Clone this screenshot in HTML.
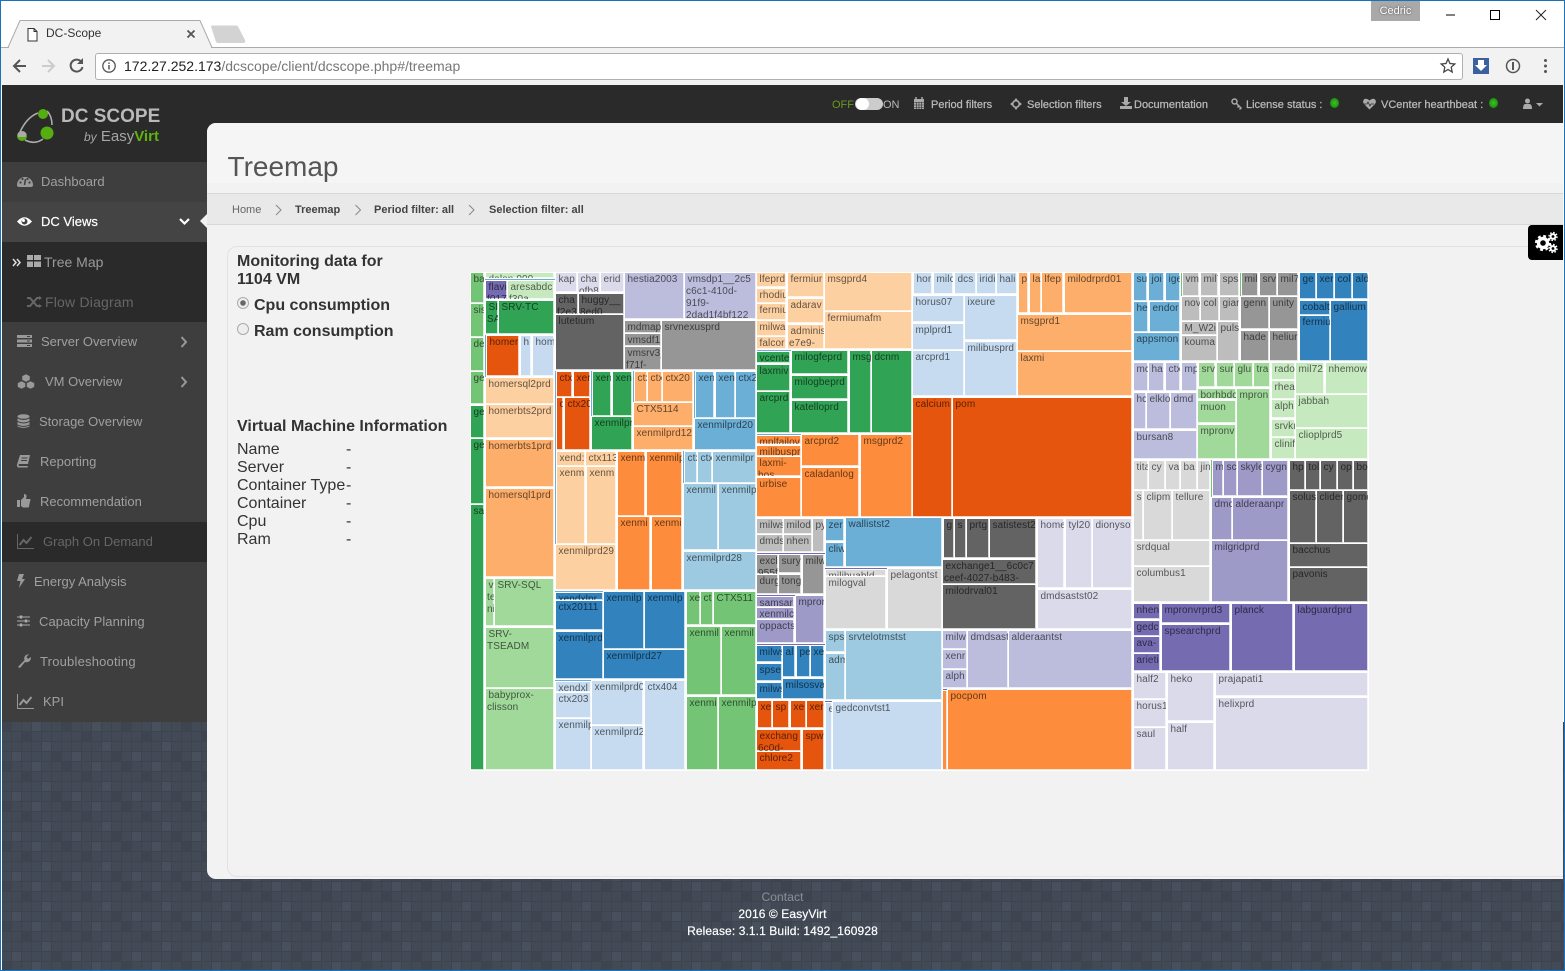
<!DOCTYPE html>
<html><head><meta charset="utf-8"><title>DC-Scope</title>
<style>
html,body{margin:0;padding:0;width:1565px;height:971px;overflow:hidden;background:#fff;font-family:"Liberation Sans",sans-serif}
.abs,.t,p,.n,.nt{position:absolute}
#root{position:absolute;left:0;top:0;width:1565px;height:971px;overflow:hidden}
svg{position:absolute;overflow:visible}
.n{left:2px;width:205px;height:40px;background:#3e3e3e}
.n.dk{background:#2a2a2a}
.nt{white-space:nowrap;font-size:13px;line-height:40px;top:0;color:#a0a0a0}
.t{white-space:nowrap;font-size:11px;color:#b9b9b9;line-height:14px;top:98px;-webkit-text-stroke:.25px #b9b9b9}
p{margin:0;outline:1px solid #fff;overflow:hidden;font-size:10px;line-height:12px;color:rgba(0,0,0,.62);padding:1px 0 0 1px;box-sizing:border-box;text-indent:1.500px;letter-spacing:.1px;box-shadow:inset -1px -1px 0 rgba(255,255,255,.75)}
.a{background:#3182bd}.b{background:#6baed6}.c{background:#9ecae1}.d{background:#c6dbef}.e{background:#e6550d}.f{background:#fd8d3c}.g{background:#fdae6b}.h{background:#fdd0a2}.i{background:#31a354}.j{background:#74c476}.k{background:#a1d99b}.l{background:#c7e9c0}.m{background:#756bb1}.o{background:#9e9ac8}.q{background:#bcbddc}.w{background:#dadaeb}.r{background:#636363}.s{background:#969696}.u{background:#bdbdbd}.v{background:#d9d9d9}
.x{position:absolute;font-size:16px;color:#333;white-space:nowrap;line-height:18px}
.bd{font-weight:bold}
.bc{position:absolute;top:204px;font-size:11px;line-height:13px;font-weight:bold;color:#444;white-space:nowrap}
</style></head>
<body><div id="root">

<!-- browser chrome -->
<div class="abs" style="left:0;top:0;width:1565px;height:971px;background:#fff"></div>
<div class="abs" style="left:0;top:47px;width:1565px;height:1px;background:#aaa"></div>
<div class="abs" style="left:0;top:48px;width:1565px;height:37px;background:#f2f2f2"></div>
<svg style="left:0;top:0" width="260" height="50"><path d="M1 47.5H8L20 20.500H200L212 47.500" fill="#f2f2f2" stroke="#aaa" stroke-width="1"/><path d="M9 48H211" stroke="#f2f2f2" stroke-width="2"/><path d="M211 26.500q0-1 1-1H236q1 0 2 1L245 40q1 3-2 3H218q-1 0-2-1Z" fill="#d3d3d3"/>
<path d="M28 28.500h6l3 3v9.500h-9zM34 28.500v3h3" fill="#fff" stroke="#333" stroke-width="1"/>
<path d="M187.500 30.500l7 7m0-7l-7 7" stroke="#555" stroke-width="1.800"/></svg>
<div class="abs" style="left:46px;top:26px;font-size:12px;line-height:15px;color:#333">DC-Scope</div>
<div class="abs" style="left:1371px;top:1px;width:49px;height:20px;background:#a9a9a9;color:#fff;font-size:11px;line-height:21px;text-align:center;text-shadow:0 0 2px #444">Cedric</div>
<svg style="left:1440px;top:0" width="120" height="30"><path d="M6 15H15" stroke="#000" stroke-width="1"/><rect x="50.500" y="10.500" width="9" height="9" fill="none" stroke="#000"/><path d="M96 10l10 10m0-10L96 20" stroke="#222" stroke-width="1"/></svg>
<svg style="left:0;top:48px" width="100" height="36"><path d="M26 18H15M20 12l-6 6 6 6" fill="none" stroke="#555" stroke-width="2"/><path d="M54 18H42M48 12l6 6-6 6" fill="none" stroke="#ccc" stroke-width="2"/><path d="M81.500 14a6 6 0 1 0 1 5" fill="none" stroke="#555" stroke-width="2"/><path d="M83 10v6h-6z" fill="#555"/></svg>
<div class="abs" style="left:95px;top:53px;width:1366px;height:25px;background:#fff;border:1px solid #b0b0b0;border-radius:3px"></div>
<svg style="left:101px;top:58px" width="18" height="18"><circle cx="8" cy="8" r="6.200" fill="none" stroke="#555" stroke-width="1.300"/><path d="M8 7v4.500M8 4.500v1.400" stroke="#555" stroke-width="1.500"/></svg>
<div class="abs" style="left:124px;top:58px;font-size:14px;line-height:16px;color:#777;white-space:nowrap"><span style="color:#222">172.27.252.173</span>/dcscope/client/dcscope.php#/treemap</div>
<svg style="left:1440px;top:56px" width="120" height="22"><path d="M8 3l2 4.500 4.800.500-3.600 3.200 1 4.800L8 13.500 3.800 16l1-4.800L1.200 8 6 7.500Z" fill="none" stroke="#444" stroke-width="1.300"/><rect x="33" y="2" width="16" height="16" fill="#3b5f9f"/><path d="M38 4h6v5h3l-6 6-6-6h3z" fill="#fff"/><circle cx="73" cy="10" r="6.500" fill="none" stroke="#555" stroke-width="1.500"/><path d="M73 6v8" stroke="#555" stroke-width="2"/><circle cx="105.500" cy="4.500" r="1.500" fill="#555"/><circle cx="105.500" cy="10" r="1.500" fill="#555"/><circle cx="105.500" cy="15.500" r="1.500" fill="#555"/></svg>

<!-- app dark header -->
<div class="abs" style="left:2px;top:85px;width:1561px;height:80px;background:#2a2a2a"></div>
<svg style="left:14px;top:105px" width="44" height="42"><path d="M6 27Q13 12 24 8M33 6Q38 11 38 20M11 35Q21 40 29 34" fill="none" stroke="#aaa" stroke-width="1.600"/><circle cx="29" cy="9" r="5" fill="#55ad10"/><circle cx="33" cy="28" r="6.500" fill="#55ad10"/><circle cx="8" cy="31" r="5" fill="#55ad10"/><path d="M3.500 29a5 5 0 0 1 9 0l-1 3H4z" fill="#aaa"/></svg>
<div class="abs" style="left:61px;top:104px;font-size:19px;font-weight:bold;line-height:26px;color:#b9b9b9;white-space:nowrap">DC SCOPE</div>
<div class="abs" style="left:84px;top:128px;font-size:15px;line-height:18px;color:#a6a6a6;white-space:nowrap"><i style="font-size:12px">by</i> Easy<b style="color:#5fb30d">Virt</b></div>

<!-- topbar -->
<div class="t" style="left:832px;color:#6a9a1f;-webkit-text-stroke:0">OFF</div>
<div class="abs" style="left:855px;top:98px;width:28px;height:12px;background:#ccc;border-radius:6px"></div>
<div class="abs" style="left:856px;top:98px;width:13px;height:12px;background:#fff;border-radius:6px"></div>
<div class="t" style="left:883px;-webkit-text-stroke:0">ON</div>
<svg style="left:913px;top:97px" width="12" height="13"><path d="M1 2h10v10H1z" fill="#aaa"/><path d="M3 0v3M9 0v3" stroke="#aaa" stroke-width="1.500"/><path d="M1 5.500h10M1 8h10M1 10.500h10M3.500 5v7M6 5v7M8.500 5v7" stroke="#2a2a2a" stroke-width=".6"/></svg>
<div class="t" style="left:931px">Period filters</div>
<svg style="left:1010px;top:98px" width="12" height="12"><circle cx="6" cy="6" r="3.300" fill="none" stroke="#aaa" stroke-width="1.700"/><path d="M6 0l1.500 2h-3zM6 12l1.500-2h-3zM0 6l2-1.500v3zM12 6l-2-1.500v3z" fill="#aaa"/></svg>
<div class="t" style="left:1027px">Selection filters</div>
<svg style="left:1120px;top:97px" width="12" height="12"><path d="M4 0h4v5h3L6 9 1 5h3zM0 9h12v3H0z" fill="#aaa"/></svg>
<div class="t" style="left:1134px">Documentation</div>
<svg style="left:1231px;top:98px" width="12" height="12"><circle cx="3.500" cy="3.500" r="2.500" fill="none" stroke="#aaa" stroke-width="1.500"/><path d="M5.500 5.500l5 5M8 8l-1.500 1.500M10 10l-1.500 1.500" stroke="#aaa" stroke-width="1.500"/></svg>
<div class="t" style="left:1246px">License status :</div>
<div class="abs" style="left:1330px;top:98px;width:9px;height:10px;border-radius:50%;background:radial-gradient(#3fc31f,#0d7c0d)"></div>
<svg style="left:1363px;top:98px" width="13" height="12"><path d="M6.500 11.500L1 6Q-1 3 1.500 1 4 0 6.500 2.500 9 0 11.500 1 14 3 12 6Z" fill="#aaa"/><path d="M1 6h3l1-2 2 4 1-2h3" fill="none" stroke="#2a2a2a" stroke-width=".8"/></svg>
<div class="t" style="left:1381px">VCenter hearthbeat :</div>
<div class="abs" style="left:1489px;top:98px;width:9px;height:10px;border-radius:50%;background:radial-gradient(#3fc31f,#0d7c0d)"></div>
<svg style="left:1522px;top:98px" width="24" height="12"><circle cx="5.500" cy="3" r="2.500" fill="#aaa"/><path d="M1 11q0-5 2.500-5h4Q10 6 10 11Z" fill="#aaa"/><path d="M14 5h7l-3.500 3.500z" fill="#aaa"/></svg>

<!-- sidebar -->
<div class="n" style="top:162px"><svg style="left:15px;top:12px" width="16" height="14"><path d="M0 11a8 8 0 0 1 16 0q0 2-2 2H2q-2 0-2-2z" fill="#999"/><circle cx="3.500" cy="8.500" r="1.100" fill="#3e3e3e"/><circle cx="5.500" cy="5" r="1.100" fill="#3e3e3e"/><circle cx="10.500" cy="5" r="1.100" fill="#3e3e3e"/><circle cx="12.500" cy="8.500" r="1.100" fill="#3e3e3e"/><path d="M7.500 11l1-6" stroke="#3e3e3e" stroke-width="1.500"/></svg><div class="nt" style="left:39px">Dashboard</div></div>
<div class="n" style="top:202px;background:#444"><svg style="left:15px;top:14px" width="15" height="11"><path d="M0 5.500Q7.500-3 15 5.500 7.500 14 0 5.500Z" fill="#fff"/><circle cx="7.500" cy="5.500" r="3" fill="#444"/><circle cx="6.500" cy="4.500" r="1.500" fill="#fff"/></svg><div class="nt" style="left:39px;color:#fff;-webkit-text-stroke:.2px #fff">DC Views</div><svg style="left:177px;top:16px" width="11" height="8"><path d="M1 1l4.500 4.500L10 1" fill="none" stroke="#fff" stroke-width="2.200"/></svg></div>
<div class="n dk" style="top:242px"><svg style="left:10px;top:16px" width="10" height="9"><path d="M1 1l3 3.500L1 8M5 1l3 3.500L5 8" fill="none" stroke="#ddd" stroke-width="1.500"/></svg><svg style="left:25px;top:13px" width="14" height="12"><path d="M0 0h6v5H0zM7 0h7v5H7zM0 6.500h6V12H0zM7 6.500h7V12H7z" fill="#aaa"/></svg><div class="nt" style="left:42px;font-size:14px;color:#9a9a9a">Tree Map</div></div>
<div class="n dk" style="top:282px"><svg style="left:25px;top:14px" width="15" height="12"><path d="M0 2h3l7 8h3M0 10h3l7-8h3" fill="none" stroke="#666" stroke-width="2"/><path d="M12 0l3 2-3 2zM12 8l3 2-3 2z" fill="#666"/></svg><div class="nt" style="left:43px;font-size:14px;color:#666;letter-spacing:.2px">Flow Diagram</div></div>
<div class="n" style="top:322px"><svg style="left:15px;top:13px" width="15" height="12"><path d="M0 0h15v3H0zM0 4.500h15v3H0zM0 9h15v3H0z" fill="#999"/><path d="M10 1.500h3M10 6h3M10 10.500h3" stroke="#3e3e3e"/></svg><div class="nt" style="left:39px">Server Overview</div><svg style="left:178px;top:14px" width="8" height="12"><path d="M1.500 1l4.500 5-4.500 5" fill="none" stroke="#999" stroke-width="2"/></svg></div>
<div class="n" style="top:362px"><svg style="left:15px;top:12px" width="18" height="15"><path d="M9 0l4 2v4l-4 2-4-2V2zM4.500 7l4 2v4l-4 2-4-2V9zM13.500 7l4 2v4l-4 2-4-2V9z" fill="#999" stroke="#3e3e3e" stroke-width=".5"/></svg><div class="nt" style="left:43px">VM Overview</div><svg style="left:178px;top:14px" width="8" height="12"><path d="M1.500 1l4.500 5-4.500 5" fill="none" stroke="#999" stroke-width="2"/></svg></div>
<div class="n" style="top:402px"><svg style="left:15px;top:12px" width="13" height="15"><ellipse cx="6.500" cy="2.500" rx="6" ry="2.300" fill="#999"/><path d="M.5 4.500q6 3 12 0v2.500q-6 3-12 0zM.5 8q6 3 12 0v2.500q-6 3-12 0zM.5 11.500q6 3 12 0v1q-6 3-12 0z" fill="#999"/></svg><div class="nt" style="left:37px">Storage Overview</div></div>
<div class="n" style="top:442px"><svg style="left:15px;top:13px" width="13" height="13"><path d="M3 0h10l-2 9H2q-1 1 0 2h9l-.5 1.500H1Q-1 11 .5 8z" fill="#999"/><path d="M4.500 3h6M4 5.500h6" stroke="#3e3e3e"/></svg><div class="nt" style="left:38px">Reporting</div></div>
<div class="n" style="top:482px"><svg style="left:15px;top:12px" width="14" height="14"><path d="M0 6h3v7H0zM4 6l3-3V0q3 0 2.500 3L9 5h4q1 1 0 2.500l-1 5q0 1-1 1H6L4 12z" fill="#999"/></svg><div class="nt" style="left:38px">Recommendation</div></div>
<div class="n dk" style="top:522px"><svg style="left:15px;top:12px" width="17" height="15"><path d="M.5 0v14.500H17" fill="none" stroke="#666"/><path d="M2.500 11l4-5 3 3 5-6" fill="none" stroke="#666" stroke-width="2"/></svg><div class="nt" style="left:41px;color:#666">Graph On Demand</div></div>
<div class="n" style="top:562px"><svg style="left:15px;top:12px" width="8" height="14"><path d="M2 0h5L5 5h3L2 14l1.500-7H0z" fill="#999"/></svg><div class="nt" style="left:32px">Energy Analysis</div></div>
<div class="n" style="top:602px"><svg style="left:15px;top:13px" width="13" height="12"><path d="M0 2h13M0 6h13M0 10h13" stroke="#aaa"/><path d="M4 .5v3M9 4.500v3M4 8.500v3" stroke="#aaa" stroke-width="2.400"/></svg><div class="nt" style="left:37px;letter-spacing:.05px">Capacity Planning</div></div>
<div class="n" style="top:642px"><svg style="left:15px;top:12px" width="14" height="14"><path d="M1 13l6.500-7Q6.500 3 9 1l3-1-2.500 3 1.500 2 3-2q0 4-3 5-1.500.5-3 0L3 14z" fill="#999"/></svg><div class="nt" style="left:38px;letter-spacing:.2px">Troubleshooting</div></div>
<div class="n" style="top:682px"><svg style="left:15px;top:12px" width="17" height="15"><path d="M.5 0v14.500H17" fill="none" stroke="#999"/><path d="M2.500 11l4-5 3 3 5-6" fill="none" stroke="#999" stroke-width="2"/></svg><div class="nt" style="left:41px">KPI</div></div>

<!-- textured bg -->
<svg style="left:2px;top:722px" width="1563" height="249"><defs><pattern id="tx" x="0" y="0" width="60" height="40" patternUnits="userSpaceOnUse"><rect width="60" height="40" fill="#424a56"/><rect x="0" y="0" width="9" height="9" fill="#3e4550"/><rect x="20" y="10" width="9" height="9" fill="#3e4550"/><rect x="40" y="20" width="9" height="9" fill="#47505c"/><rect x="10" y="30" width="9" height="9" fill="#47505c"/><rect x="30" y="0" width="9" height="9" fill="#47505c"/><rect x="50" y="30" width="9" height="9" fill="#3e4550"/><path d="M9.500 0v40M19.500 0v40M29.500 0v40M39.500 0v40M49.500 0v40M59.500 0v40M0 9.500h60M0 19.500h60M0 29.500h60M0 39.500h60" stroke="#3d444f"/></pattern></defs><rect width="1563" height="249" fill="url(#tx)"/></svg>

<!-- main panel -->
<div class="abs" style="left:207px;top:123px;width:1356px;height:756px;background:#f2f2f2;border-radius:9px 0 0 9px"></div>
<div class="abs" style="left:207px;top:123px;width:1356px;height:60px;background:#f5f5f5;border-radius:9px 0 0 0"></div>
<div class="abs" style="left:227.500px;top:150px;font-size:28px;line-height:34px;color:#555">Treemap</div>
<div class="abs" style="left:207px;top:193px;width:1356px;height:32px;background:#e9e9e9;border-top:1px solid #d8d8d8;border-bottom:1px solid #d8d8d8;box-sizing:border-box"></div>
<div class="bc" style="left:232px;font-weight:normal;color:#666">Home</div>
<div class="bc" style="left:295px">Treemap</div>
<div class="bc" style="left:374px">Period filter: all</div>
<div class="bc" style="left:489px">Selection filter: all</div>
<svg style="left:270px;top:203px" width="210" height="14"><path d="M6 2l5 5-5 5M85.500 2l5 5-5 5M199 2l5 5-5 5" fill="none" stroke="#888" stroke-width="1"/></svg>
<div class="abs" style="left:227px;top:246px;width:1336px;height:631px;border:1px solid #e2e2e2;border-right:0;border-radius:10px 0 0 10px;box-sizing:border-box"></div>
<div class="abs" style="left:1528px;top:225px;width:35px;height:35px;background:#000;border-radius:4px 0 0 4px"></div>
<svg style="left:1533px;top:230px" width="26" height="24"><g fill="none" stroke="#fff"><circle cx="10" cy="13" r="4.500" stroke-width="3.400"/><circle cx="10" cy="13" r="7" stroke-width="2.200" stroke-dasharray="2.900 2.600"/><circle cx="20" cy="6.500" r="2.400" stroke-width="2"/><circle cx="20" cy="6.500" r="4" stroke-width="1.400" stroke-dasharray="1.600 1.540"/><circle cx="20" cy="18.500" r="2.400" stroke-width="2"/><circle cx="20" cy="18.500" r="4" stroke-width="1.400" stroke-dasharray="1.600 1.540"/></g></svg>

<!-- left info -->
<div class="x bd" style="left:237px;top:253px">Monitoring data for</div>
<div class="x bd" style="left:237px;top:271px">1104 VM</div>
<svg style="left:236px;top:296px" width="14" height="42"><circle cx="7" cy="7" r="5.500" fill="#eee" stroke="#aaa"/><circle cx="7" cy="7" r="2.800" fill="#666"/><circle cx="7" cy="33" r="5.500" fill="#eee" stroke="#aaa"/></svg>
<div class="x bd" style="left:254px;top:297px">Cpu consumption</div>
<div class="x bd" style="left:254px;top:323px">Ram consumption</div>
<div class="x bd" style="left:237px;top:418px">Virtual Machine Information</div>
<div class="x" style="left:237px;top:441px">Name</div><div class="x" style="left:346px;top:441px">-</div>
<div class="x" style="left:237px;top:459px">Server</div><div class="x" style="left:346px;top:459px">-</div>
<div class="x" style="left:237px;top:477px">Container Type</div><div class="x" style="left:346px;top:477px">-</div>
<div class="x" style="left:237px;top:495px">Container</div><div class="x" style="left:346px;top:495px">-</div>
<div class="x" style="left:237px;top:513px">Cpu</div><div class="x" style="left:346px;top:513px">-</div>
<div class="x" style="left:237px;top:531px">Ram</div><div class="x" style="left:346px;top:531px">-</div>

<!-- footer -->
<div class="abs" style="left:0;top:889px;width:1565px;text-align:center;font-size:12px;line-height:17px;color:#fff;letter-spacing:.1px;-webkit-text-stroke:.2px #fff"><div style="color:#8b9098;-webkit-text-stroke:0">Contact</div><div>2016 © EasyVirt</div><div>Release: 3.1.1 Build: 1492_160928</div></div>

<!-- treemap backgrounds -->
<div class="abs" style="left:484px;top:273px;width:649px;height:497px;background:#6baed6"></div>
<div class="abs" style="left:756px;top:517px;width:377px;height:253px;background:#756bb1"></div>
<div class="abs" style="left:1133px;top:273px;width:235px;height:497px;background:#74c476"></div>

<p class="j" style="left:471px;top:273px;width:13px;height:30px">ba</p>
<p class="j" style="left:471px;top:304px;width:13px;height:33px">sis</p>
<p class="j" style="left:471px;top:338px;width:13px;height:33px">de</p>
<p class="j" style="left:471px;top:372px;width:13px;height:32px">ge</p>
<p class="i" style="left:471px;top:406px;width:13px;height:32px">ge</p>
<p class="i" style="left:471px;top:439px;width:13px;height:65px">ge</p>
<p class="i" style="left:471px;top:505px;width:13px;height:265px">sa</p>

<p class="l" style="left:486px;top:273px;width:68px;height:5px">dalon 000</p>
<p class="m" style="left:486px;top:281px;width:21px;height:18px">flavi f017</p>
<p class="l" style="left:508px;top:281px;width:46px;height:18px">aresabdc f30a</p>
<p class="i" style="left:486px;top:301px;width:12px;height:33px">SI SA</p>
<p class="i" style="left:499px;top:301px;width:55px;height:33px">SRV-TC</p>
<p class="e" style="left:487px;top:336px;width:32px;height:40px">homer</p>
<p class="d" style="left:521px;top:336px;width:10px;height:40px">h</p>
<p class="d" style="left:533px;top:336px;width:21px;height:40px">hom</p>
<p class="h" style="left:486px;top:378px;width:68px;height:26px">homersql2prd</p>
<p class="h" style="left:486px;top:405px;width:68px;height:33px">homerbts2prd</p>
<p class="g" style="left:486px;top:440px;width:68px;height:47px">homerbts1prd</p>
<p class="g" style="left:486px;top:489px;width:68px;height:88px">homersql1prd</p>
<p class="k" style="left:486px;top:579px;width:8px;height:47px">v te ni</p>
<p class="k" style="left:495px;top:579px;width:59px;height:47px">SRV-SQL</p>
<p class="k" style="left:486px;top:628px;width:68px;height:60px">SRV-TSEADM</p>
<p class="k" style="left:486px;top:689px;width:68px;height:81px">babyprox-clisson</p>

<p class="w" style="left:556px;top:273px;width:21px;height:19px">kap</p>
<p class="w" style="left:578px;top:273px;width:22px;height:19px">cha ofb8</p>
<p class="w" style="left:601px;top:273px;width:23px;height:19px">erid</p>
<p class="r" style="left:556px;top:294px;width:22px;height:20px">cha f2e3</p>
<p class="r" style="left:579px;top:294px;width:45px;height:20px">huggy__ 8ed0</p>
<p class="r" style="left:556px;top:315px;width:68px;height:55px">lutetium</p>
<p class="q" style="left:625px;top:273px;width:59px;height:46px">hestia2003</p>
<p class="q" style="left:685px;top:273px;width:71px;height:46px">vmsdp1__2c5 c6c1-410d-91f9-2dad1f4bf122</p>
<p class="s" style="left:625px;top:321px;width:36px;height:12px">mdmap</p>
<p class="s" style="left:625px;top:334px;width:36px;height:12px">vmsdf1</p>
<p class="s" style="left:625px;top:347px;width:36px;height:23px">vmsrv3_ f71f-</p>
<p class="s" style="left:662px;top:321px;width:94px;height:49px">srvnexusprd</p>

<p class="e" style="left:557px;top:372px;width:15px;height:25px">ctx</p>
<p class="e" style="left:574px;top:372px;width:16px;height:25px">xer</p>
<p class="e" style="left:557px;top:398px;width:6px;height:52px">c</p>
<p class="e" style="left:565px;top:398px;width:25px;height:52px">ctx20</p>
<p class="i" style="left:593px;top:372px;width:18px;height:44px">xen</p>
<p class="i" style="left:613px;top:372px;width:19px;height:44px">xen</p>
<p class="i" style="left:592px;top:417px;width:40px;height:33px">xenmilpr</p>
<p class="g" style="left:635px;top:372px;width:12px;height:30px">ctx</p>
<p class="g" style="left:648px;top:372px;width:14px;height:30px">ctx</p>
<p class="g" style="left:663px;top:372px;width:30px;height:30px">ctx20</p>
<p class="g" style="left:634px;top:403px;width:59px;height:23px">CTX5114</p>
<p class="g" style="left:634px;top:427px;width:59px;height:23px">xenmilprd12</p>
<p class="b" style="left:696px;top:372px;width:18px;height:46px">xen</p>
<p class="b" style="left:716px;top:372px;width:19px;height:46px">xen</p>
<p class="b" style="left:736px;top:372px;width:20px;height:46px">ctx2</p>
<p class="b" style="left:695px;top:419px;width:61px;height:31px">xenmilprd20</p>

<p class="h" style="left:557px;top:452px;width:28px;height:14px">xend:</p>
<p class="h" style="left:586px;top:452px;width:30px;height:14px">ctx113</p>
<p class="h" style="left:557px;top:467px;width:28px;height:77px">xenm</p>
<p class="h" style="left:587px;top:467px;width:29px;height:77px">xenm</p>
<p class="h" style="left:556px;top:545px;width:60px;height:45px">xenmilprd29</p>
<p class="f" style="left:618px;top:452px;width:27px;height:64px">xenm</p>
<p class="f" style="left:647px;top:452px;width:35px;height:64px">xenmilp</p>
<p class="f" style="left:618px;top:517px;width:32px;height:73px">xenmi</p>
<p class="f" style="left:652px;top:517px;width:30px;height:73px">xenmi</p>
<p class="c" style="left:685px;top:452px;width:12px;height:31px">ctx</p>
<p class="c" style="left:698px;top:452px;width:14px;height:31px">ctx</p>
<p class="c" style="left:713px;top:452px;width:43px;height:31px">xenmilpr</p>
<p class="c" style="left:684px;top:484px;width:34px;height:66px">xenmil</p>
<p class="c" style="left:719px;top:484px;width:37px;height:66px">xenmilp</p>
<p class="c" style="left:684px;top:552px;width:72px;height:38px">xenmilprd28</p>

<p class="a" style="left:556px;top:593px;width:47px;height:7px">xendxlpr</p>
<p class="a" style="left:556px;top:601px;width:47px;height:29px">ctx20111</p>
<p class="a" style="left:556px;top:632px;width:47px;height:47px">xenmilprd</p>
<p class="a" style="left:604px;top:592px;width:40px;height:57px">xenmilp</p>
<p class="a" style="left:645px;top:592px;width:40px;height:57px">xenmilp</p>
<p class="a" style="left:604px;top:650px;width:81px;height:29px">xenmilprd27</p>
<p class="d" style="left:556px;top:682px;width:35px;height:10px">xendxl</p>
<p class="d" style="left:556px;top:693px;width:35px;height:25px">ctx203</p>
<p class="d" style="left:556px;top:719px;width:35px;height:51px">xenmilp</p>
<p class="d" style="left:592px;top:681px;width:51px;height:44px">xenmilprd0</p>
<p class="d" style="left:592px;top:726px;width:51px;height:44px">xenmilprd2</p>
<p class="d" style="left:645px;top:681px;width:40px;height:89px">ctx404</p>
<p class="j" style="left:687px;top:592px;width:13px;height:33px">xe</p>
<p class="j" style="left:701px;top:592px;width:12px;height:33px">ct</p>
<p class="j" style="left:714px;top:592px;width:42px;height:33px">CTX511</p>
<p class="j" style="left:687px;top:627px;width:34px;height:68px">xenmil</p>
<p class="j" style="left:722px;top:627px;width:34px;height:68px">xenmil</p>
<p class="j" style="left:687px;top:697px;width:31px;height:73px">xenmi</p>
<p class="j" style="left:719px;top:697px;width:37px;height:73px">xenmilp</p>

<p class="h" style="left:757px;top:273px;width:29px;height:14px">lfeprd</p>
<p class="h" style="left:757px;top:289px;width:29px;height:14px">rhodiu</p>
<p class="h" style="left:757px;top:304px;width:29px;height:16px">fermiu</p>
<p class="h" style="left:757px;top:321px;width:29px;height:15px">milwa</p>
<p class="h" style="left:757px;top:337px;width:29px;height:12px">falcor</p>
<p class="h" style="left:788px;top:273px;width:36px;height:24px">fermiur</p>
<p class="h" style="left:788px;top:299px;width:36px;height:24px">adarav</p>
<p class="h" style="left:788px;top:325px;width:36px;height:24px">adminis e7e9-</p>
<p class="h" style="left:825px;top:273px;width:87px;height:38px">msgprd4</p>
<p class="h" style="left:825px;top:312px;width:87px;height:37px">fermiumafm</p>
<p class="i" style="left:757px;top:352px;width:33px;height:11px">vcente</p>
<p class="i" style="left:757px;top:365px;width:33px;height:26px">laxmiv</p>
<p class="i" style="left:757px;top:392px;width:33px;height:41px">arcprd</p>
<p class="i" style="left:792px;top:351px;width:56px;height:23px">milogfeprd</p>
<p class="i" style="left:792px;top:376px;width:56px;height:23px">milogbeprd</p>
<p class="i" style="left:792px;top:401px;width:56px;height:32px">katelloprd</p>
<p class="i" style="left:850px;top:351px;width:21px;height:82px">msg</p>
<p class="i" style="left:872px;top:351px;width:40px;height:82px">dcnm</p>
<p class="f" style="left:757px;top:436px;width:44px;height:8px">mplfailov</p>
<p class="f" style="left:757px;top:446px;width:44px;height:10px">milibuspr</p>
<p class="f" style="left:757px;top:457px;width:44px;height:19px">laxmi-hos</p>
<p class="f" style="left:757px;top:478px;width:44px;height:39px">urbise</p>
<p class="f" style="left:802px;top:435px;width:57px;height:31px">arcprd2</p>
<p class="f" style="left:802px;top:468px;width:57px;height:49px">caladanlog</p>
<p class="f" style="left:861px;top:435px;width:51px;height:82px">msgprd2</p>

<p class="d" style="left:914px;top:273px;width:18px;height:21px">hor</p>
<p class="d" style="left:934px;top:273px;width:19px;height:21px">milc</p>
<p class="d" style="left:955px;top:273px;width:21px;height:21px">dcs</p>
<p class="d" style="left:977px;top:273px;width:19px;height:21px">iridi</p>
<p class="d" style="left:997px;top:273px;width:20px;height:21px">hali</p>
<p class="d" style="left:913px;top:296px;width:51px;height:26px">horus07</p>
<p class="d" style="left:913px;top:324px;width:51px;height:26px">mplprd1</p>
<p class="d" style="left:913px;top:351px;width:51px;height:45px">arcprd1</p>
<p class="d" style="left:965px;top:296px;width:52px;height:44px">ixeure</p>
<p class="d" style="left:965px;top:342px;width:52px;height:54px">milibusprd</p>
<p class="g" style="left:1019px;top:273px;width:9px;height:40px">p</p>
<p class="g" style="left:1030px;top:273px;width:11px;height:40px">la</p>
<p class="g" style="left:1042px;top:273px;width:21px;height:40px">lfep</p>
<p class="g" style="left:1065px;top:273px;width:67px;height:40px">milodrprd01</p>
<p class="g" style="left:1018px;top:315px;width:114px;height:36px">msgprd1</p>
<p class="g" style="left:1018px;top:352px;width:114px;height:44px">laxmi</p>
<p class="e" style="left:913px;top:398px;width:39px;height:119px">calcium</p>
<p class="e" style="left:953px;top:398px;width:179px;height:119px">pom</p>

<p class="u" style="left:757px;top:519px;width:26px;height:15px">milws</p>
<p class="u" style="left:784px;top:519px;width:28px;height:15px">milod</p>
<p class="u" style="left:757px;top:535px;width:26px;height:17px">dmds</p>
<p class="u" style="left:784px;top:535px;width:28px;height:17px">nhen</p>
<p class="u" style="left:813px;top:519px;width:11px;height:33px">py</p>
<p class="s" style="left:757px;top:555px;width:21px;height:19px">excl 955f</p>
<p class="s" style="left:757px;top:575px;width:21px;height:19px">durg</p>
<p class="s" style="left:779px;top:555px;width:22px;height:18px">sury</p>
<p class="s" style="left:779px;top:575px;width:22px;height:19px">tong</p>
<p class="s" style="left:803px;top:555px;width:21px;height:39px">milw</p>
<p class="o" style="left:757px;top:597px;width:37px;height:10px">samsar</p>
<p class="o" style="left:757px;top:608px;width:37px;height:11px">xenmilc</p>
<p class="o" style="left:757px;top:620px;width:37px;height:23px">oppacts</p>
<p class="o" style="left:796px;top:596px;width:28px;height:47px">mpron</p>
<p class="a" style="left:757px;top:646px;width:25px;height:16px">milws</p>
<p class="a" style="left:757px;top:664px;width:25px;height:17px">spse</p>
<p class="a" style="left:757px;top:683px;width:25px;height:16px">milws</p>
<p class="a" style="left:783px;top:646px;width:12px;height:31px">al</p>
<p class="a" style="left:797px;top:646px;width:13px;height:31px">pe</p>
<p class="a" style="left:811px;top:646px;width:13px;height:31px">xe</p>
<p class="a" style="left:783px;top:679px;width:41px;height:20px">milsosva</p>
<p class="e" style="left:758px;top:701px;width:14px;height:27px">xe</p>
<p class="e" style="left:773px;top:701px;width:16px;height:27px">sp</p>
<p class="e" style="left:791px;top:701px;width:15px;height:27px">xe</p>
<p class="e" style="left:807px;top:701px;width:17px;height:27px">xer</p>
<p class="e" style="left:757px;top:730px;width:44px;height:21px">exchang 6c0d-</p>
<p class="e" style="left:757px;top:752px;width:44px;height:18px">chlore2</p>
<p class="e" style="left:803px;top:730px;width:21px;height:40px">spw</p>

<p class="b" style="left:826px;top:519px;width:18px;height:22px">zer</p>
<p class="b" style="left:826px;top:543px;width:18px;height:24px">cliw</p>
<p class="b" style="left:846px;top:518px;width:96px;height:49px">wallistst2</p>
<p class="v" style="left:826px;top:570px;width:60px;height:6px">milibuabld</p>
<p class="v" style="left:826px;top:577px;width:60px;height:52px">milogval</p>
<p class="v" style="left:888px;top:569px;width:54px;height:60px">pelagontst</p>
<p class="c" style="left:826px;top:631px;width:19px;height:21px">sps</p>
<p class="c" style="left:826px;top:654px;width:19px;height:46px">adm</p>
<p class="c" style="left:846px;top:631px;width:96px;height:69px">srvtelotmstst</p>
<p class="d" style="left:826px;top:703px;width:6px;height:67px">e</p>
<p class="d" style="left:833px;top:702px;width:109px;height:68px">gedconvtst1</p>

<p class="r" style="left:944px;top:519px;width:10px;height:39px">g</p>
<p class="r" style="left:955px;top:519px;width:11px;height:39px">s</p>
<p class="r" style="left:967px;top:519px;width:22px;height:39px">prtg</p>
<p class="r" style="left:990px;top:519px;width:46px;height:39px">satistest2</p>
<p class="r" style="left:943px;top:560px;width:93px;height:24px">exchange1__6c0c7 ceef-4027-b483-</p>
<p class="r" style="left:943px;top:585px;width:93px;height:44px">milodrval01</p>
<p class="w" style="left:1038px;top:519px;width:26px;height:69px">home</p>
<p class="w" style="left:1066px;top:519px;width:26px;height:69px">tyl20</p>
<p class="w" style="left:1093px;top:519px;width:39px;height:69px">dionyso</p>
<p class="w" style="left:1038px;top:590px;width:94px;height:39px">dmdsastst02</p>
<p class="q" style="left:943px;top:631px;width:24px;height:18px">milw</p>
<p class="q" style="left:943px;top:650px;width:24px;height:19px">xenr</p>
<p class="q" style="left:943px;top:670px;width:24px;height:18px">alph</p>
<p class="q" style="left:968px;top:631px;width:40px;height:57px">dmdsast</p>
<p class="q" style="left:1009px;top:631px;width:123px;height:57px">alderaantst</p>
<p class="f" style="left:943px;top:691px;width:4px;height:79px"></p>
<p class="f" style="left:948px;top:690px;width:184px;height:80px">pocpom</p>

<p class="b" style="left:1134px;top:273px;width:13px;height:28px">su</p>
<p class="b" style="left:1149px;top:273px;width:15px;height:28px">joi</p>
<p class="b" style="left:1166px;top:273px;width:14px;height:28px">ige</p>
<p class="b" style="left:1134px;top:302px;width:14px;height:30px">he</p>
<p class="b" style="left:1150px;top:302px;width:30px;height:30px">endor</p>
<p class="b" style="left:1134px;top:333px;width:46px;height:28px">appsmon</p>
<p class="u" style="left:1183px;top:273px;width:16px;height:23px">vm</p>
<p class="u" style="left:1201px;top:273px;width:17px;height:23px">mil7</p>
<p class="u" style="left:1220px;top:273px;width:19px;height:23px">sps</p>
<p class="u" style="left:1182px;top:297px;width:18px;height:24px">nov</p>
<p class="u" style="left:1201px;top:297px;width:18px;height:24px">col</p>
<p class="u" style="left:1220px;top:297px;width:19px;height:24px">giar</p>
<p class="u" style="left:1182px;top:322px;width:35px;height:13px">M_W2i</p>
<p class="u" style="left:1182px;top:336px;width:35px;height:25px">kouma</p>
<p class="u" style="left:1218px;top:322px;width:21px;height:39px">puls</p>
<p class="s" style="left:1242px;top:273px;width:16px;height:23px">mil7</p>
<p class="s" style="left:1260px;top:273px;width:17px;height:23px">srv</p>
<p class="s" style="left:1278px;top:273px;width:20px;height:23px">mil7</p>
<p class="s" style="left:1241px;top:297px;width:28px;height:32px">genn</p>
<p class="s" style="left:1270px;top:297px;width:28px;height:32px">unity</p>
<p class="s" style="left:1241px;top:331px;width:28px;height:30px">hade</p>
<p class="s" style="left:1270px;top:331px;width:28px;height:30px">heliur</p>
<p class="a" style="left:1300px;top:273px;width:16px;height:26px">ge</p>
<p class="a" style="left:1317px;top:273px;width:17px;height:26px">xer</p>
<p class="a" style="left:1335px;top:273px;width:17px;height:26px">col</p>
<p class="a" style="left:1353px;top:273px;width:15px;height:26px">ald</p>
<p class="a" style="left:1300px;top:301px;width:30px;height:14px">cobalt</p>
<p class="a" style="left:1300px;top:316px;width:30px;height:45px">fermiu</p>
<p class="a" style="left:1331px;top:301px;width:37px;height:60px">gallium</p>

<p class="q" style="left:1134px;top:363px;width:14px;height:28px">mc</p>
<p class="q" style="left:1149px;top:363px;width:15px;height:28px">ha</p>
<p class="q" style="left:1166px;top:363px;width:14px;height:28px">ctx</p>
<p class="q" style="left:1182px;top:363px;width:15px;height:28px">mp</p>
<p class="q" style="left:1134px;top:393px;width:12px;height:36px">hc</p>
<p class="q" style="left:1147px;top:393px;width:23px;height:36px">elklo</p>
<p class="q" style="left:1171px;top:393px;width:26px;height:36px">dmd</p>
<p class="q" style="left:1134px;top:431px;width:63px;height:28px">bursan8</p>
<p class="k" style="left:1199px;top:363px;width:16px;height:24px">srv</p>
<p class="k" style="left:1217px;top:363px;width:17px;height:24px">sur</p>
<p class="k" style="left:1235px;top:363px;width:18px;height:24px">glu</p>
<p class="k" style="left:1254px;top:363px;width:16px;height:24px">tra</p>
<p class="k" style="left:1198px;top:389px;width:38px;height:10px">borhbdc</p>
<p class="k" style="left:1198px;top:401px;width:38px;height:22px">muon</p>
<p class="k" style="left:1198px;top:425px;width:38px;height:34px">mpronv</p>
<p class="k" style="left:1237px;top:389px;width:33px;height:70px">mpron</p>
<p class="l" style="left:1272px;top:363px;width:23px;height:17px">rado</p>
<p class="l" style="left:1272px;top:381px;width:23px;height:18px">rhea</p>
<p class="l" style="left:1272px;top:400px;width:23px;height:18px">alph</p>
<p class="l" style="left:1272px;top:420px;width:23px;height:17px">srvkr</p>
<p class="l" style="left:1272px;top:438px;width:23px;height:21px">clinif</p>
<p class="l" style="left:1296px;top:363px;width:28px;height:31px">mil72</p>
<p class="l" style="left:1326px;top:363px;width:42px;height:31px">nhemow</p>
<p class="l" style="left:1296px;top:395px;width:72px;height:33px">jabbah</p>
<p class="l" style="left:1296px;top:429px;width:72px;height:30px">clioplprd5</p>

<p class="v" style="left:1134px;top:461px;width:14px;height:29px">tita</p>
<p class="v" style="left:1149px;top:461px;width:16px;height:29px">cy</p>
<p class="v" style="left:1166px;top:461px;width:14px;height:29px">va</p>
<p class="v" style="left:1181px;top:461px;width:16px;height:29px">ba</p>
<p class="v" style="left:1198px;top:461px;width:12px;height:29px">jin</p>
<p class="v" style="left:1134px;top:491px;width:9px;height:49px">s</p>
<p class="v" style="left:1144px;top:491px;width:28px;height:49px">clipm</p>
<p class="v" style="left:1173px;top:491px;width:37px;height:49px">tellure</p>
<p class="v" style="left:1134px;top:541px;width:76px;height:25px">srdqual</p>
<p class="v" style="left:1134px;top:567px;width:76px;height:35px">columbus1</p>
<p class="o" style="left:1213px;top:461px;width:10px;height:35px">m</p>
<p class="o" style="left:1224px;top:461px;width:13px;height:35px">sc</p>
<p class="o" style="left:1238px;top:461px;width:24px;height:35px">skyle</p>
<p class="o" style="left:1263px;top:461px;width:25px;height:35px">cygn</p>
<p class="o" style="left:1212px;top:498px;width:20px;height:42px">dmc</p>
<p class="o" style="left:1233px;top:498px;width:55px;height:42px">alderaanpr</p>
<p class="o" style="left:1212px;top:541px;width:76px;height:61px">milgridprd</p>
<p class="r" style="left:1290px;top:461px;width:15px;height:29px">hp</p>
<p class="r" style="left:1306px;top:461px;width:14px;height:29px">tol</p>
<p class="r" style="left:1321px;top:461px;width:16px;height:29px">cy</p>
<p class="r" style="left:1338px;top:461px;width:15px;height:29px">op</p>
<p class="r" style="left:1354px;top:461px;width:14px;height:29px">bo</p>
<p class="r" style="left:1290px;top:491px;width:26px;height:52px">solus</p>
<p class="r" style="left:1317px;top:491px;width:26px;height:52px">clider</p>
<p class="r" style="left:1344px;top:491px;width:24px;height:52px">gome</p>
<p class="r" style="left:1290px;top:544px;width:78px;height:23px">bacchus</p>
<p class="r" style="left:1290px;top:568px;width:78px;height:34px">pavonis</p>

<p class="m" style="left:1134px;top:604px;width:26px;height:15px">nhen</p>
<p class="m" style="left:1134px;top:621px;width:26px;height:15px">gedc</p>
<p class="m" style="left:1134px;top:637px;width:26px;height:16px">ava-</p>
<p class="m" style="left:1134px;top:654px;width:26px;height:17px">arieti</p>
<p class="m" style="left:1162px;top:604px;width:68px;height:19px">mpronvrprd3</p>
<p class="m" style="left:1162px;top:625px;width:68px;height:46px">spsearchprd</p>
<p class="m" style="left:1232px;top:604px;width:61px;height:67px">planck</p>
<p class="m" style="left:1295px;top:604px;width:73px;height:67px">labguardprd</p>

<p class="w" style="left:1134px;top:673px;width:32px;height:26px">half2</p>
<p class="w" style="left:1134px;top:700px;width:32px;height:27px">horus1</p>
<p class="w" style="left:1134px;top:728px;width:32px;height:42px">saul</p>
<p class="w" style="left:1168px;top:673px;width:46px;height:48px">heko</p>
<p class="w" style="left:1168px;top:723px;width:46px;height:47px">half</p>
<p class="w" style="left:1216px;top:673px;width:152px;height:23px">prajapati1</p>
<p class="w" style="left:1216px;top:698px;width:152px;height:72px">helixprd</p>

<!-- DC Views notch -->
<svg style="left:200px;top:214px" width="7" height="14"><path d="M7 0L0 7l7 7z" fill="#f2f2f2"/></svg>
<!-- window border -->
<div class="abs" style="left:0;top:0;width:1565px;height:971px;border:1px solid #1a73ba;box-sizing:border-box"></div>
</div></body></html>
